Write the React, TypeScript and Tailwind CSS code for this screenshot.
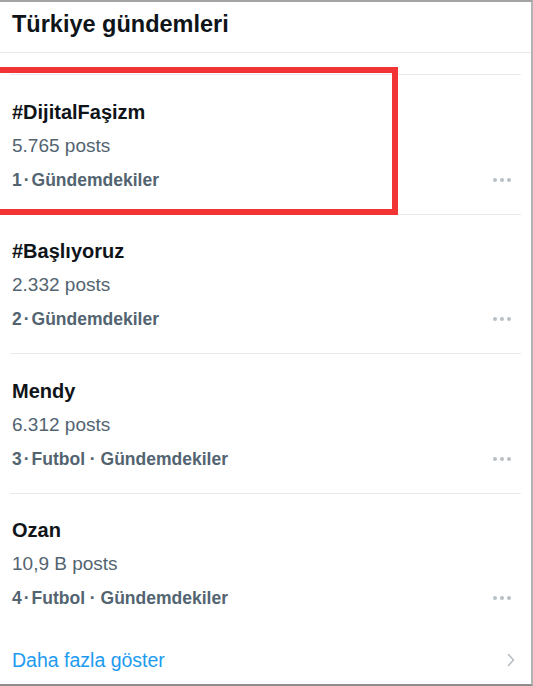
import React from "react";

const items = [
  { title: "#DijitalFaşizm", posts: "5.765 posts", rank: "1", cat: "Gündemdekiler" },
  { title: "#Başlıyoruz", posts: "2.332 posts", rank: "2", cat: "Gündemdekiler" },
  { title: "Mendy", posts: "6.312 posts", rank: "3", cat: "Futbol · Gündemdekiler" },
  { title: "Ozan", posts: "10,9 B posts", rank: "4", cat: "Futbol · Gündemdekiler" },
];

function Dots() {
  return (
    <div className="flex items-center gap-[3px]">
      <span className="block w-[4px] h-[4px] rounded-full bg-[#b9c0c5]" />
      <span className="block w-[4px] h-[4px] rounded-full bg-[#b9c0c5]" />
      <span className="block w-[4px] h-[4px] rounded-full bg-[#b9c0c5]" />
    </div>
  );
}

export default function App() {
  return (
    <div
      className="relative w-[533px] h-[686px] bg-white border-t-2 border-r-2 border-b-2 border-t-[#a3a3a3] border-r-[#b3b3b3] border-b-[#8c8c8c] overflow-hidden"
      style={{ fontFamily: '"Liberation Sans", Arial, sans-serif' }}
    >
      <div className="pt-[8px] pb-[14px] pl-[12px]">
        <div className="text-[23.5px] leading-[28px] font-bold text-[#0f1419]">Türkiye gündemleri</div>
      </div>
      <div className="h-[1px] bg-[#e6e9eb]" />
      <div className="h-[21px]" />
      {items.map((it, i) => (
        <div key={i}>
          <div className="mx-[10px] h-[1px] bg-[#e8ebed]" />
          <div className={`pt-[19.5px] ${i === 3 ? "pb-0" : "pb-[17px]"} pl-[12px] pr-[20px]`}>
            <div className="text-[20px] leading-[34px] font-bold text-[#0f1419]">{it.title}</div>
            <div className="text-[19px] leading-[34px] text-[#536471]">{it.posts}</div>
            <div className="flex items-center justify-between">
              <div className="text-[17.5px] leading-[34px] font-bold text-[#536471]">
                {it.rank}
                <span className="mx-[2px]">·</span>
                {it.cat}
              </div>
              <Dots />
            </div>
          </div>
        </div>
      ))}
      <div className="mt-[28px] flex items-center justify-between pl-[12px] pr-[16px]">
        <div className="text-[19.5px] leading-[34px] text-[#1d9bf0]">Daha fazla göster</div>
        <svg width="8" height="14" viewBox="0 0 8 14" fill="none">
          <path d="M1.5 1.5 L6.5 7 L1.5 12.5" stroke="#b3b9be" strokeWidth="1.4" strokeLinecap="round" strokeLinejoin="round" />
        </svg>
      </div>
      <div className="absolute left-[-10px] top-[65px] w-[408px] h-[148px] border-[6px] border-[#f23434] pointer-events-none" />
    </div>
  );
}
